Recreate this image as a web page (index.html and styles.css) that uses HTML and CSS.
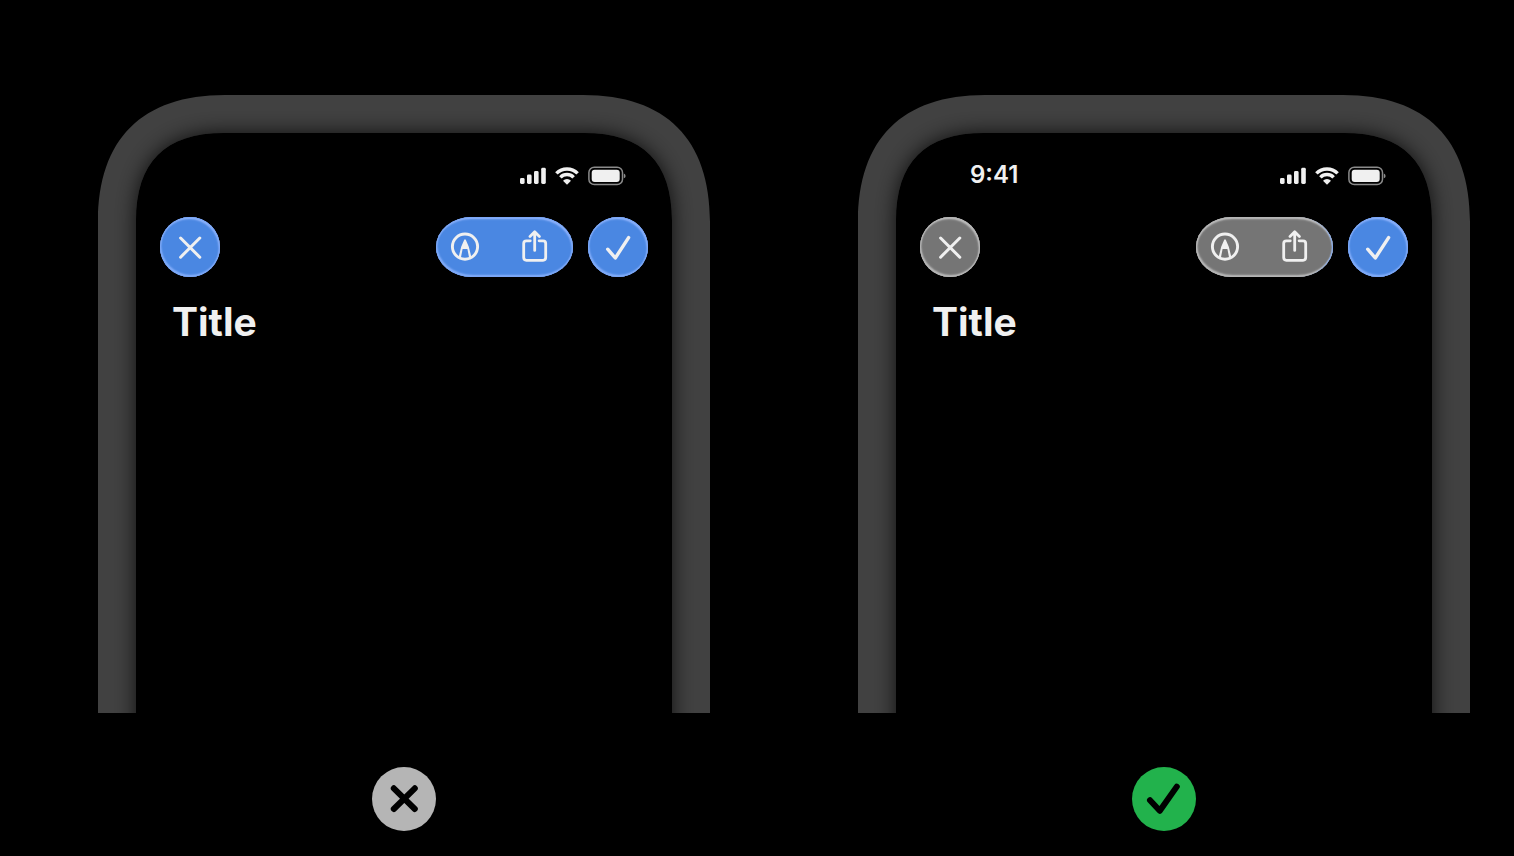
FILE: index.html
```html
<!DOCTYPE html>
<html lang="en">
<head>
<meta charset="utf-8">
<meta name="viewport" content="width=device-width, initial-scale=1">
<title>Toolbar tint comparison</title>
<link rel="stylesheet" href="styles.css">
</head>
<body>
<svg class="defs" aria-hidden="true">
  <defs>
    <clipPath id="bezel-clip"><path clip-rule="evenodd" d="M0 618V127C0 44 44 0 127 0H485C568 0 612 44 612 127V618H574V126C574 67 545 38 486 38H126C67 38 38 67 38 126V618Z"/></clipPath>
    <filter id="bezel-blur" x="-20%" y="-20%" width="140%" height="140%"><feGaussianBlur stdDeviation="10"/></filter>
    <symbol id="bezel" viewBox="0 0 612 618">
      <g clip-path="url(#bezel-clip)">
        <rect width="612" height="618" fill="#414141"/>
        <path d="M38 700V126C38 67 67 38 126 38H486C545 38 574 67 574 126V700Z" fill="#000" opacity=".8" filter="url(#bezel-blur)"/>
      </g>
    </symbol>
    <symbol id="signal" viewBox="0 0 26 18">
      <rect x="0" y="11" width="4.6" height="6" rx="1.4"/><rect x="7" y="7.5" width="4.6" height="9.5" rx="1.4"/><rect x="14" y="4" width="4.6" height="13" rx="1.4"/><rect x="21.2" y=".8" width="4.6" height="16.2" rx="1.4"/>
    </symbol>
    <symbol id="wifi" viewBox="0 0 24 18">
      <path d="M1.4 6.4A14.8 14.8 0 0 1 22.6 6.4M5.4 10.4A9.2 9.2 0 0 1 18.6 10.4" fill="none" stroke="currentColor" stroke-width="3.5"/>
      <path d="M12 17.7L8 13.8A5.6 5.6 0 0 1 16 13.8Z"/>
    </symbol>
    <symbol id="battery" viewBox="0 0 38 20">
      <rect x=".9" y="1.2" width="33.6" height="17.4" rx="5.4" fill="none" stroke="#8b8b8b" stroke-width="1.5"/>
      <rect x="3.7" y="3.8" width="28" height="12.2" rx="3"/>
      <path d="M35.8 7.6Q37.6 8.3 37.6 9.9T35.8 12.2Z" fill="#8b8b8b"/>
    </symbol>
    <symbol id="close" viewBox="0 0 60 60"><path d="M20.6 21L39.8 40.2M39.8 21L20.6 40.2" fill="none" stroke="currentColor" stroke-width="3" stroke-linecap="round"/></symbol>
    <symbol id="done" viewBox="0 0 60 60"><path d="M19.7 32.2L27.3 41L40.6 20.6" fill="none" stroke="currentColor" stroke-width="3.4" stroke-linecap="round" stroke-linejoin="round"/></symbol>
    <symbol id="markup" viewBox="0 0 30 30">
      <circle cx="15" cy="14.6" r="12.6" fill="none" stroke="currentColor" stroke-width="2.9"/>
      <path d="M13.9 8.4Q15 6.2 16.1 8.4L18.8 14.8L21.4 25.2L19.2 26.2L17.4 17H12.6L10.8 26.2L8.6 25.2L11.2 14.8Z"/>
    </symbol>
    <symbol id="share" viewBox="0 0 28 34">
      <path d="M9.3 10.8H5.4Q2.7 10.8 2.7 13.5V27.6Q2.7 30.3 5.4 30.3H22Q24.7 30.3 24.7 27.6V13.5Q24.7 10.8 22 10.8H18.1M13.7 20.4V2.4M9 6.4L13.7 1.7L18.4 6.4" fill="none" stroke="currentColor" stroke-width="2.8" stroke-linecap="round" stroke-linejoin="round"/>
    </symbol>
  </defs>
</svg>
<main class="comparison">
  <section class="example" aria-label="Tinted toolbar, avoid">
    <div class="phone">
      <svg class="phone-bezel" viewBox="0 0 612 618" aria-hidden="true"><use href="#bezel"/></svg>
      <div class="screen">
        <div class="status-bar">
          <div class="status-icons">
            <svg class="icon-signal" aria-hidden="true"><use href="#signal"/></svg>
            <svg class="icon-wifi" aria-hidden="true"><use href="#wifi"/></svg>
            <svg class="icon-battery" aria-hidden="true"><use href="#battery"/></svg>
          </div>
        </div>
        <div class="toolbar">
          <button class="glass round tinted" type="button" aria-label="Close"><svg class="icon-round" aria-hidden="true"><use href="#close"/></svg></button>
          <div class="toolbar-end">
            <div class="glass group tinted">
              <button class="group-button" type="button" aria-label="Markup"><svg class="icon-markup" aria-hidden="true"><use href="#markup"/></svg></button>
              <button class="group-button" type="button" aria-label="Share"><svg class="icon-share" aria-hidden="true"><use href="#share"/></svg></button>
            </div>
            <button class="glass round tinted" type="button" aria-label="Done"><svg class="icon-round" aria-hidden="true"><use href="#done"/></svg></button>
          </div>
        </div>
        <h2 class="title">Title</h2>
      </div>
    </div>
    <svg class="verdict verdict-no" viewBox="0 0 64 64" role="img" aria-label="Incorrect"><circle cx="32" cy="32" r="32"/><path d="M21.8 21.3L42.8 42M42.8 21.3L21.8 42"/></svg>
  </section>
  <section class="example" aria-label="Neutral toolbar with tinted primary action, preferred">
    <div class="phone">
      <svg class="phone-bezel" viewBox="0 0 612 618" aria-hidden="true"><use href="#bezel"/></svg>
      <div class="screen">
        <div class="status-bar">
          <time class="clock">9:41</time>
          <div class="status-icons">
            <svg class="icon-signal" aria-hidden="true"><use href="#signal"/></svg>
            <svg class="icon-wifi" aria-hidden="true"><use href="#wifi"/></svg>
            <svg class="icon-battery" aria-hidden="true"><use href="#battery"/></svg>
          </div>
        </div>
        <div class="toolbar">
          <button class="glass round" type="button" aria-label="Close"><svg class="icon-round" aria-hidden="true"><use href="#close"/></svg></button>
          <div class="toolbar-end">
            <div class="glass group reflecting">
              <button class="group-button" type="button" aria-label="Markup"><svg class="icon-markup" aria-hidden="true"><use href="#markup"/></svg></button>
              <button class="group-button" type="button" aria-label="Share"><svg class="icon-share" aria-hidden="true"><use href="#share"/></svg></button>
            </div>
            <button class="glass round tinted" type="button" aria-label="Done"><svg class="icon-round" aria-hidden="true"><use href="#done"/></svg></button>
          </div>
        </div>
        <h2 class="title">Title</h2>
      </div>
    </div>
    <svg class="verdict verdict-yes" viewBox="0 0 64 64" role="img" aria-label="Correct"><circle cx="32" cy="32" r="32"/><path d="M18 33.2L27.8 43.8L44.8 19.6"/></svg>
  </section>
</main>
</body>
</html>
```
FILE: styles.css
```css
* {
  box-sizing: border-box;
}

body {
  margin: 0;
  background: #000;
  color: #f0f0f0;
  font-family: Inter, "Liberation Sans", sans-serif;
}

svg {
  display: block;
  fill: currentColor;
}

.defs {
  position: absolute;
  width: 0;
  height: 0;
}

.comparison {
  display: grid;
  grid-template-columns: 1fr 1fr;
  gap: 148px;
  padding: 95px 44px 25px 98px;
}

.example {
  display: flex;
  flex-direction: column;
  align-items: center;
  gap: 54px;
}

.phone {
  display: grid;
  width: 100%;
}

.phone-bezel,
.screen {
  grid-area: 1 / 1;
}

.phone-bezel {
  width: 100%;
}

.screen {
  padding: 68px 62px 0;
}

.status-bar {
  display: flex;
  align-items: flex-start;
  height: 24px;
  padding: 0 22px 0 50px;
}

.clock {
  font-size: 24px;
  font-weight: 600;
  line-height: 24px;
}

.status-icons {
  display: flex;
  align-items: center;
  gap: 9px;
  margin-left: auto;
  padding-top: 3px;
}

.icon-signal {
  width: 26px;
  height: 18px;
}

.icon-wifi {
  width: 24px;
  height: 18px;
}

.icon-battery {
  width: 38px;
  height: 20px;
}

.toolbar {
  display: flex;
  justify-content: space-between;
  margin-top: 30px;
}

.toolbar-end {
  display: flex;
  gap: 15px;
}

.glass {
  height: 60px;
  background: #757575;
  box-shadow:
    inset 0 0 1px 1px #b4b4b4,
    inset -1px 2px 2px #c4c4c4,
    inset 1px -2px 2px #bababa;
}

.tinted {
  background: #4a87e2;
  box-shadow:
    inset 0 0 1px 1px #7aa6f6,
    inset -1px 2px 2px #98b9ff,
    inset 1px -2px 2px #8ab2fc;
}

.reflecting {
  box-shadow:
    inset -2px 0 1px -1px #7ea9f5,
    inset 0 0 1px 1px #b4b4b4,
    inset 0 2px 2px #c4c4c4,
    inset 1px -2px 2px #bababa;
}

.round {
  width: 60px;
  padding: 0;
  border: 0;
  border-radius: 50%;
  color: inherit;
}

.icon-round {
  width: 60px;
  height: 60px;
}

.group {
  display: flex;
  justify-content: space-between;
  width: 137px;
  padding: 0 24px 0 14px;
  border-radius: 36px / 30px;
}

.group-button {
  padding: 0;
  border: 0;
  background: none;
  color: inherit;
}

.icon-markup {
  width: 30px;
  height: 30px;
}

.icon-share {
  width: 28px;
  height: 34px;
}

.title {
  margin: 20px 12px 0;
  font-size: 39px;
  font-weight: 700;
  line-height: 50px;
}

.verdict {
  width: 64px;
  height: 64px;
}

.verdict path {
  fill: none;
  stroke: #000;
  stroke-width: 6;
  stroke-linecap: round;
  stroke-linejoin: round;
}

.verdict-no {
  color: #b5b5b5;
}

.verdict-yes {
  color: #22b24c;
}
```
